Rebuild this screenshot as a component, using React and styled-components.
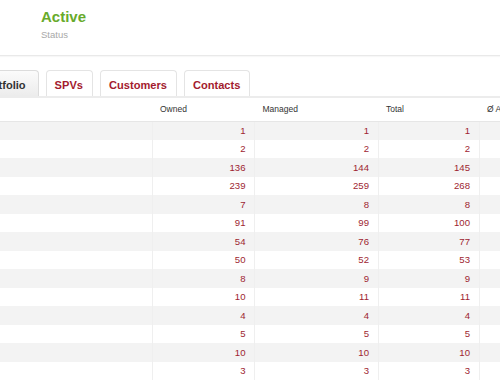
import React from "react";
import styled, { createGlobalStyle } from "styled-components";

const GlobalStyle = createGlobalStyle`
  body {
    margin: 0;
    background: #ffffff;
    font-family: "Liberation Sans", Arial, Helvetica, sans-serif;
    overflow: hidden;
  }
`;

const rows = [
  [1, 1, 1],
  [2, 2, 2],
  [136, 144, 145],
  [239, 259, 268],
  [7, 8, 8],
  [91, 99, 100],
  [54, 76, 77],
  [50, 52, 53],
  [8, 9, 9],
  [10, 11, 11],
  [4, 4, 4],
  [5, 5, 5],
  [10, 10, 10],
  [3, 3, 3],
];

const tabs = ["Portfolio", "SPVs", "Customers", "Contacts"];

function App() {
  return (
    <Page>
      <GlobalStyle />
      <Header>
        <StatusBlock>
          <StatusValue>Active</StatusValue>
          <StatusLabel>Status</StatusLabel>
        </StatusBlock>
      </Header>

      <TabBar>
        {tabs.map((t, i) => (
          <Tab key={t} active={i === 0}>
            {t}
          </Tab>
        ))}
      </TabBar>

      <Table>
        <colgroup>
          <col style={{ width: 152 }} />
          <col style={{ width: 102.5 }} />
          <col style={{ width: 123.5 }} />
          <col style={{ width: 101 }} />
          <col style={{ width: 110 }} />
        </colgroup>
        <thead>
          <tr>
            <HeadCell />
            <HeadCell>Owned</HeadCell>
            <HeadCell>Managed</HeadCell>
            <HeadCell>Total</HeadCell>
            <HeadCell>Ø Avg</HeadCell>
          </tr>
        </thead>
        <tbody>
          {rows.map((r, i) => (
            <Row key={i} striped={i % 2 === 0}>
              <Cell />
              {r.map((v, j) => (
                <NumCell key={j}>{v}</NumCell>
              ))}
              <Cell />
            </Row>
          ))}
        </tbody>
      </Table>
    </Page>
  );
}

const Page = styled.div`
  width: 500px;
  height: 383px;
  overflow: hidden;
  display: flex;
  flex-direction: column;
`;

const Header = styled.div`
  height: 56px;
  box-sizing: border-box;
  padding: 8px 0 0 41px;
  border-bottom: 1px solid #e9e9e9;
  box-shadow: 0 1px 1px rgba(0, 0, 0, 0.03);
  flex-shrink: 0;
`;

const StatusBlock = styled.div`
  display: flex;
  flex-direction: column;
  gap: 3px;
`;

const StatusValue = styled.div`
  color: #68ab2b;
  font-weight: bold;
  font-size: 15px;
  line-height: 18px;
`;

const StatusLabel = styled.div`
  color: #a8a8a8;
  font-size: 9.5px;
  line-height: 12px;
`;

const TabBar = styled.div`
  display: flex;
  align-items: flex-end;
  gap: 7px;
  margin-left: -33px;
  padding-top: 14px;
  border-bottom: 2px solid #ececec;
  flex-shrink: 0;
`;

const Tab = styled.div`
  height: 26px;
  box-sizing: border-box;
  display: flex;
  align-items: center;
  padding: 2px ${(p) => (p.active ? "12px" : "9px")} 0 ${(p) => (p.active ? "12px" : "8px")};
  border: 1px solid ${(p) => (p.active ? "#dcdcdc" : "#e4e4e4")};
  border-bottom: none;
  border-radius: 4px 4px 0 0;
  font-weight: bold;
  font-size: 11.1px;
  color: ${(p) => (p.active ? "#333333" : "#a31b2e")};
  background: ${(p) =>
    p.active ? "linear-gradient(#fbfbfb, #ececec)" : "#ffffff"};
`;

const Table = styled.table`
  border-collapse: collapse;
  table-layout: fixed;
  width: 589px;
  flex-shrink: 0;
`;

const HeadCell = styled.th`
  height: 23px;
  padding: 0 0 0 8px;
  box-sizing: border-box;
  text-align: left;
  font-weight: normal;
  font-size: 8.5px;
  color: #333333;
  border-bottom: 1px solid #e6e6e6;
  white-space: nowrap;
  overflow: hidden;
`;

const Row = styled.tr`
  height: 18.5px;
  background: ${(p) => (p.striped ? "#f3f3f3" : "#ffffff")};
`;

const Cell = styled.td`
  padding: 0;
  border-left: 1px solid #efefef;
  &:first-child {
    border-left: none;
  }
`;

const NumCell = styled(Cell)`
  text-align: right;
  padding-right: 8.5px;
  font-size: 9.6px;
  color: #9e1f31;
`;

export default App;
